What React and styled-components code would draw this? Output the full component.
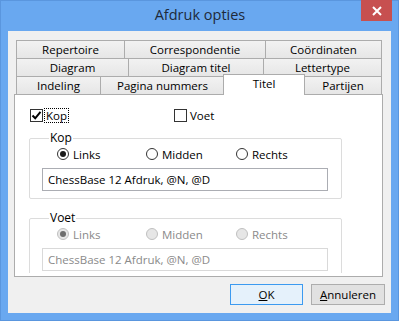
import React from "react";
import styled, { createGlobalStyle } from "styled-components";

const Global = createGlobalStyle`
  html, body { margin: 0; padding: 0; background: #69a8f0; }
  body { font-family: "Open Sans", "Noto Sans", sans-serif; font-size: 11.5px; color: #000; }
  * { box-sizing: border-box; }
`;

const Window = styled.div`
  width: 399px;
  height: 321px;
  background: #69a8f0;
  border: 1px solid #5a96de;
  display: flex;
  flex-direction: column;
`;

const TitleBar = styled.div`
  height: 30px;
  display: grid;
  grid-template-columns: 1fr auto 1fr;
  align-items: start;
`;

const Title = styled.div`
  grid-column: 2;
  font-size: 14.5px;
  line-height: 28px;
  color: #1e2a3a;
  padding-left: 1px;
`;

const CloseButton = styled.div`
  grid-column: 3;
  justify-self: end;
  margin-top: -1px;
  margin-right: 6px;
  width: 31px;
  height: 21px;
  background: #c75050;
  display: flex;
  align-items: center;
  justify-content: center;
`;

const Client = styled.div`
  margin: 0 7px;
  width: 383px;
  height: 282px;
  background: #f0f0f0;
  padding: 9px 0 0 6px;
  display: flex;
  flex-direction: column;
`;

const TabRows = styled.div`
  margin-left: 2px;
  display: flex;
  flex-direction: column;
`;

const TabRow = styled.div`
  display: flex;
  height: 18px;
  position: relative;
`;

const Tab = styled.div`
  flex: none;
  height: ${(p) => (p.$selected ? "21px" : "18px")};
  margin: ${(p) => (p.$selected ? "-2px -1px -1px -1px" : "0")};
  background: ${(p) => (p.$selected ? "#fff" : "linear-gradient(#f2f2f2, #e6e6e6)")};
  border: 1px solid #acacac;
  border-right: ${(p) => (p.$last || p.$selected ? "1px solid #acacac" : "none")};
  border-bottom: none;
  position: relative;
  z-index: ${(p) => (p.$selected ? 2 : 0)};
  display: flex;
  align-items: ${(p) => (p.$selected ? "flex-start" : "center")};
  padding-top: ${(p) => (p.$selected ? "1px" : "0")};
  justify-content: center;
  line-height: 15px;
  white-space: nowrap;
`;

const Panel = styled.div`
  width: 369px;
  height: 183px;
  background: #fff;
  border: 1px solid #acacac;
  padding: 0 0 3px 0;
  display: flex;
  flex-direction: column;
  position: relative;
  z-index: 1;
`;

const PanelInner = styled.div`
  flex: 1;
  overflow: hidden;
  padding: 13px 0 0 14px;
`;

const CheckRow = styled.div`
  display: flex;
  align-items: center;
  height: 15px;
  padding-left: 1px;
`;

const CheckItem = styled.label`
  display: flex;
  align-items: center;
  width: ${(p) => p.$w}px;
`;

const CheckBox = styled.span`
  width: 13px;
  height: 13px;
  border: 1px solid #333;
  background: #fff;
  display: flex;
  align-items: center;
  justify-content: center;
  flex: none;
`;

const CheckLabel = styled.span`
  margin-left: 1px;
  padding: 0 1px;
  line-height: 13px;
  border: 1px dotted ${(p) => (p.$focus ? "#000" : "transparent")};
`;

const Group = styled.fieldset`
  margin: ${(p) => p.$mt}px 0 0 0;
  width: 313px;
  border: 1px solid #dcdcdc;
  border-radius: 2px;
  padding: 0 0 7px 12px;
  min-width: 0;
`;

const Legend = styled.legend`
  margin-left: 7px;
  padding: 0 1px;
  line-height: 16px;
  font-size: 12px;
  color: #000;
`;

const RadioRow = styled.div`
  display: grid;
  grid-template-columns: 89px 90px auto;
  padding-left: 15px;
  height: 16px;
  align-items: center;
`;

const RadioItem = styled.label`
  display: flex;
  align-items: center;
  color: ${(p) => (p.$disabled ? "#8a8a8a" : "#000")};
`;

const RadioCircle = styled.span`
  width: 12px;
  height: 12px;
  border-radius: 50%;
  border: 1px solid ${(p) => (p.$disabled ? "#c0c0c0" : "#333")};
  background: ${(p) => (p.$disabled ? "#e6e6e6" : "#fff")};
  display: flex;
  align-items: center;
  justify-content: center;
  flex: none;
  margin-right: 4px;
  &::after {
    content: "";
    display: ${(p) => (p.$checked ? "block" : "none")};
    width: 6px;
    height: 6px;
    border-radius: 50%;
    background: ${(p) => (p.$disabled ? "#6d6d6d" : "#1a1a1a")};
  }
`;

const TextBox = styled.div`
  margin-top: 6px;
  width: 286px;
  height: 23px;
  border: 1px solid ${(p) => (p.$disabled ? "#d9d9d9" : "#abadb3")};
  background: #fff;
  padding-left: 5px;
  display: flex;
  align-items: center;
  color: ${(p) => (p.$disabled ? "#8a8a8a" : "#000")};
  white-space: nowrap;
`;

const ButtonRow = styled.div`
  display: flex;
  justify-content: flex-end;
  gap: 8px;
  margin-top: 7px;
  padding-right: 6px;
`;

const Button = styled.div`
  width: ${(p) => p.$w}px;
  height: 21px;
  border: 1px solid ${(p) => (p.$default ? "#3c9af0" : "#adadad")};
  background: ${(p) => (p.$default ? "#e5f1fb" : "#e1e1e1")};
  display: flex;
  align-items: center;
  justify-content: center;
  u { text-decoration: underline; }
`;

const tabRows = [
  [
    { t: "Repertoire", w: 108 },
    { t: "Correspondentie", w: 141 },
    { t: "Coördinaten", w: 116 },
  ],
  [
    { t: "Diagram", w: 112 },
    { t: "Diagram titel", w: 135 },
    { t: "Lettertype", w: 118 },
  ],
  [
    { t: "Indeling", w: 84 },
    { t: "Pagina nummers", w: 124 },
    { t: "Titel", w: 80, sel: true },
    { t: "Partijen", w: 77 },
  ],
];

const opts = ["Links", "Midden", "Rechts"];

function Radios({ disabled }) {
  return (
    <RadioRow>
      {opts.map((o, i) => (
        <RadioItem key={o} $disabled={disabled}>
          <RadioCircle $checked={i === 0} $disabled={disabled} />
          {o}
        </RadioItem>
      ))}
    </RadioRow>
  );
}

export default function App() {
  return (
    <>
      <Global />
      <Window>
        <TitleBar>
          <Title>Afdruk opties</Title>
          <CloseButton>
            <svg width="10" height="10" viewBox="0 0 10 10">
              <path d="M1 1 L9 9 M9 1 L1 9" stroke="#fff" strokeWidth="2" />
            </svg>
          </CloseButton>
        </TitleBar>
        <Client>
          <TabRows>
            {tabRows.map((row, ri) => (
              <TabRow key={ri}>
                {row.map((tab, ti) => (
                  <Tab
                    key={tab.t}
                    $selected={tab.sel}
                    $last={ti === row.length - 1}
                    style={{ width: tab.sel ? tab.w + 2 : tab.w + (ti === row.length - 1 ? 1 : 0) }}
                  >
                    {tab.t}
                  </Tab>
                ))}
              </TabRow>
            ))}
          </TabRows>
          <Panel>
            <PanelInner>
              <CheckRow>
                <CheckItem $w={144}>
                  <CheckBox>
                    <svg width="11" height="11" viewBox="0 0 11 11">
                      <path d="M1.5 5.5 L4.2 8.3 L9.5 1.8" stroke="#000" strokeWidth="2" fill="none" />
                    </svg>
                  </CheckBox>
                  <CheckLabel $focus>Kop</CheckLabel>
                </CheckItem>
                <CheckItem $w={60}>
                  <CheckBox />
                  <CheckLabel>Voet</CheckLabel>
                </CheckItem>
              </CheckRow>
              <Group $mt={7}>
                <Legend>Kop</Legend>
                <Radios />
                <TextBox>ChessBase 12 Afdruk, @N, @D</TextBox>
              </Group>
              <Group $mt={11}>
                <Legend>Voet</Legend>
                <Radios disabled />
                <TextBox $disabled>ChessBase 12 Afdruk, @N, @D</TextBox>
              </Group>
            </PanelInner>
          </Panel>
          <ButtonRow>
            <Button $w={73} $default>
              <span><u>O</u>K</span>
            </Button>
            <Button $w={74}>
              <span><u>A</u>nnuleren</span>
            </Button>
          </ButtonRow>
        </Client>
      </Window>
    </>
  );
}
